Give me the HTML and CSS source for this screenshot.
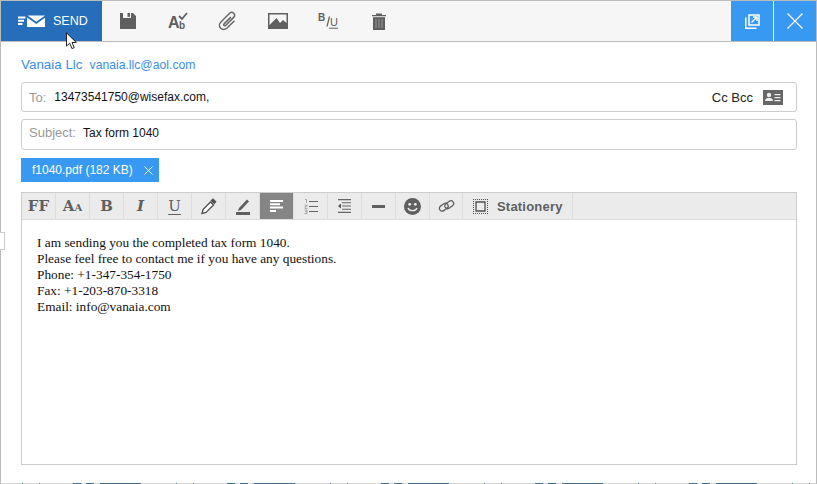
FILE: index.html
```html
<!DOCTYPE html>
<html lang="en">
<head>
<meta charset="utf-8">
<title>Compose</title>
<link rel="stylesheet" href="styles.css">
</head>
<body>
<div class="window">
  <header class="topbar">
    <button class="send">
      <svg width="28" height="12" viewBox="0 0 28 12"><path d="M0 1.500h7.500v2H0zM0 4.800h6v2H0zM0 8.100h4.500v2H0z" fill="#fff"/><path d="M9.500 0.500h17.500l-8.700 6.300zM9 2.500l9.300 6.600 8.700-6.300V12H9z" fill="#fff"/></svg>
      <span>SEND</span>
    </button>
    <div class="tools">
      <svg class="tool" width="16" height="16" viewBox="0 0 16 16"><path d="M0 0h3v5h8V0h2l3 3v13H0z" fill="#5f5f5f"/><path d="M7.500 0h2.500v3.800H7.500z" fill="#5f5f5f"/></svg>
      <svg class="tool t2" width="20" height="18" viewBox="0 0 20 18"><text x="0" y="16" class="ab-a">A</text><text x="11" y="17" class="ab-b">b</text><path d="M11 4l3 3 5-6" fill="none" stroke="#5f5f5f" stroke-width="1.800"/></svg>
      <svg class="tool t3" width="20" height="20" viewBox="0 0 20 20"><g transform="rotate(45 10 10) translate(10 10) scale(1.2) translate(-10 -10)"><path d="M13.600 6V15a3.600 3.600 0 0 1-7.200 0V4.500a2.400 2.400 0 0 1 4.800 0V14a.9.9 0 0 1-1.800 0V6" fill="none" stroke="#666" stroke-width="1.250"/></g></svg>
      <svg class="tool t4" width="20" height="16" viewBox="0 0 20 16"><path d="M0 0h20v16H0z" fill="#5f5f5f"/><path d="M1.500 1.500h17v8.500l-3.500-3-3 3-3.500-5-7 7z" fill="#f5f5f5"/></svg>
      <svg class="tool t5" width="21" height="16" viewBox="0 0 21 16"><text x="0" y="8" class="biu-b">B</text><path d="M9 13.500L11.500 3.500" stroke="#5f5f5f" stroke-width="1.200"/><text x="12" y="13" class="biu-u">U</text><path d="M11 15.200h9" stroke="#5f5f5f"/></svg>
      <svg class="tool t6" width="14" height="17" viewBox="0 0 14 17"><path d="M0 2h14v1.200H0zM4 0.500h6V2H4z" fill="#5f5f5f"/><path d="M1 4.200h12V17H1z" fill="#5f5f5f"/><path d="M4 6v9M7 6v9M10 6v9" stroke="#9b9b9b"/></svg>
    </div>
    <div class="winbtns">
      <button class="winbtn"><svg width="15" height="15" viewBox="0 0 15 15"><path d="M4 1h10v10H4z" fill="none" stroke="#fff" stroke-width="1.500"/><path d="M.8 3.500v10.700h10.700" fill="none" stroke="#fff" stroke-width="1.500"/><path d="M6.500 8.500l5-5M8 3h4v4" fill="none" stroke="#fff" stroke-width="1.400"/></svg></button>
      <button class="winbtn"><svg width="16" height="16" viewBox="0 0 16 16"><path d="M0.500 0.500l15 15M15.500 0.500l-15 15" stroke="#fff" stroke-width="1.200"/></svg></button>
    </div>
  </header>
  <main class="compose">
    <div class="from"><span class="from-name">Vanaia Llc</span><span class="from-mail">vanaia.llc@aol.com</span></div>
    <div class="field to">
      <span class="label">To:</span><span class="value">13473541750@wisefax.com,</span>
      <span class="cc">Cc Bcc</span>
      <svg class="contact" width="20" height="15" viewBox="0 0 20 15"><path d="M0 0h20v15H0z" fill="#666"/><circle cx="6" cy="5" r="2.200" fill="#eee"/><path d="M2 11c0-2.500 2-3 4-3s4 .5 4 3z" fill="#eee"/><path d="M11.500 4h6v1.300h-6zM11.500 7h6v1.300h-6zM11.500 10h6v1.300h-6z" fill="#eee"/></svg>
    </div>
    <div class="field subject"><span class="label">Subject:</span><span class="value">Tax form 1040</span></div>
    <div class="attachment"><span>f1040.pdf (182 KB)</span><svg width="9" height="9" viewBox="0 0 9 9"><path d="M0.500 0.500l8 8M8.500 0.500l-8 8" stroke="#fff"/></svg></div>
    <section class="editor">
      <div class="edbar">
        <div class="edbtn glyph ff">FF</div>
        <div class="edbtn glyph aa">A<small>A</small></div>
        <div class="edbtn glyph">B</div>
        <div class="edbtn glyph it">I</div>
        <div class="edbtn glyph un">U</div>
        <div class="edbtn"><svg width="16" height="17" viewBox="0 0 16 17"><path d="M1 15.500l1-4 7.500-7.500 3 3L5 14.500z" fill="#fff" stroke="#4f4f4f" stroke-width="1.300"/><path d="M9.500 2.500l2.500-2.300 3.500 3.500-2.300 2.500z" fill="#4f4f4f"/></svg></div>
        <div class="edbtn"><svg width="14" height="17" viewBox="0 0 14 17"><path d="M3 10l8-8.500 2 2-8 8.500-3 1z" fill="#5f5f5f"/><path d="M0 14h14v3H0z" fill="#5f5f5f"/></svg></div>
        <div class="edbtn active"><svg width="14" height="12" viewBox="0 0 14 12"><path d="M0 0h13v2H0zM0 3.300h10v2H0zM0 6.600h13v2H0zM0 9.900h6v2H0z" fill="#fff"/></svg></div>
        <div class="edbtn"><svg width="14" height="15" viewBox="0 0 14 15"><path d="M5 2.500h9M5 7.500h9M5 12.500h9" stroke="#666" stroke-width="1.200"/><path d="M1 0.500h1.500v3.500M0.500 6h2.500v1.700H1V9.500h2.500M0.500 11h2.500v3.500h-2.500M1 12.700h2" fill="none" stroke="#999" stroke-width=".8"/></svg></div>
        <div class="edbtn"><svg width="14" height="14" viewBox="0 0 14 14"><path d="M0 .6h13M4 3.800h9M4 7h9M4 10.200h9M0 13.400h13" stroke="#666" stroke-width="1.100"/><path d="M3 4.500v5L0 7z" fill="#555"/></svg></div>
        <div class="edbtn"><svg width="13" height="3" viewBox="0 0 13 3"><path d="M0 0h13v3H0z" fill="#5f5f5f"/></svg></div>
        <div class="edbtn"><svg width="17" height="17" viewBox="0 0 17 17"><circle cx="8.500" cy="8.500" r="8.500" fill="#5f5f5f"/><circle cx="5.700" cy="6.300" r="1.400" fill="#eee"/><circle cx="11.300" cy="6.300" r="1.400" fill="#eee"/><path d="M4 10c1 3.500 8 3.500 9 0" fill="none" stroke="#eee" stroke-width="1.300"/></svg></div>
        <div class="edbtn link"><svg width="17" height="12" viewBox="0 0 17 12"><g fill="none" stroke="#5f5f5f" stroke-width="1.300"><rect x="1" y="4.500" width="9.500" height="5.500" rx="2.700" transform="rotate(-35 5.700 7.200)"/><rect x="6.500" y="2" width="9.500" height="5.500" rx="2.700" transform="rotate(-35 11.200 4.800)"/></g></svg></div>
        <div class="edbtn stationery"><svg width="15" height="15" viewBox="0 0 15 15"><path d="M3 3h9v9H3z" fill="none" stroke="#4f4f4f" stroke-width="1.300"/><path d="M0 .5h15M0 14.500h15M.5 0v15M14.500 0v15" fill="none" stroke="#4f4f4f" stroke-width="1" stroke-dasharray="1 1"/></svg><span>Stationery</span></div>
      </div>
      <div class="body">
        <p>I am sending you the completed tax form 1040.</p>
        <p>Please feel free to contact me if you have any questions.</p>
        <p>Phone: +1-347-354-1750</p>
        <p>Fax: +1-203-870-3318</p>
        <p>Email: info@vanaia.com</p>
      </div>
    </section>
  </main>
  <svg class="cursor" width="12" height="18" viewBox="0 0 14 20"><path d="M0.500 0.500v15.500l3.800-3.400 2.600 6.200 2.700-1.100-2.600-6h5z" fill="#fff" stroke="#111" stroke-width="1.100"/></svg>
  <div class="stub"></div>
  <div class="edge"></div>
</div>
</body>
</html>
```
FILE: styles.css
```css
* { box-sizing: border-box; }
html, body { margin: 0; padding: 0; background: #fff; }
body { width: 817px; height: 484px; overflow: hidden; font-family: "Liberation Sans", Arial, sans-serif; }
button { border: 0; padding: 0; margin: 0; font: inherit; }

.window { position: relative; width: 817px; height: 484px; border: 1px solid #bbb; border-bottom: 0; display: flex; flex-direction: column; }

.topbar { height: 41px; flex: none; display: flex; background: #f6f6f6; border-bottom: 1px solid #bbb; }
.send { width: 101px; background: #266eb9; color: #fff; font-size: 12.500px; display: flex; align-items: center; padding-left: 17px; gap: 7px; }
.tools { flex: 1; display: flex; align-items: center; padding-left: 18px; position: relative; }
.tool { flex: none; }
.t2 { margin-left: 32px; }
.t3 { margin-left: 30px; }
.t4 { margin-left: 30px; }
.t5 { margin-left: 30px; }
.t6 { margin-left: 33px; }
.ab-a { font: bold 16px "Liberation Sans", sans-serif; fill: #5f5f5f; }
.ab-b { font: bold 10px "Liberation Sans", sans-serif; fill: #5f5f5f; }
.biu-b { font: bold 10px "Liberation Sans", sans-serif; fill: #5f5f5f; }
.biu-u { font: 11px "Liberation Sans", sans-serif; fill: #5f5f5f; }
.winbtns { display: flex; gap: 1px; }
.winbtn { width: 42px; height: 40px; background: #3899f2; display: flex; align-items: center; justify-content: center; }

.compose { flex: 1; padding: 0 19px 19px 20px; display: flex; flex-direction: column; }
.from { height: 40px; padding-top: 15px; display: flex; align-items: baseline; gap: 7px; color: #3a8ee6; flex: none; }
.from-name { font-size: 13.400px; }
.from-mail { font-size: 12.200px; }

.field { border: 1px solid #ccc; border-radius: 3px; display: flex; align-items: center; font-size: 12px; padding: 0 13px 0 7px; flex: none; }
.to { height: 30px; }
.subject { height: 31px; margin-top: 7px; padding-bottom: 4px; }
.label { color: #999; font-size: 13px; }
.to .label { margin-right: 8px; }
.subject .label { margin-right: 7px; }
.value { color: #111; flex: 1; }
.cc { color: #222; font-size: 13px; margin-right: 10px; }
.contact { flex: none; }

.attachment { margin-top: 8px; width: 138px; height: 24px; background: #3899f2; color: #fff; font-size: 12px; display: flex; align-items: center; padding-left: 11px; gap: 11px; flex: none; }

.editor { margin-top: 10px; flex: 1; border: 1px solid #ccc; display: flex; flex-direction: column; min-height: 0; }
.edbar { height: 27px; flex: none; background: #ebebeb; display: flex; border-bottom: 1px solid #ddd; }
.edbtn { width: 34px; height: 100%; border-right: 1px solid #ddd; display: flex; align-items: center; justify-content: center; color: #5f5f5f; flex: none; }
.link { width: 33px; }
.glyph { font-family: "DejaVu Serif", "Liberation Serif", serif; font-weight: bold; font-size: 15px; }
.glyph small { font-size: 10px; margin-top: 3px; }
.it { font-style: italic; }
.un { text-decoration: underline; text-underline-offset: 3px; font-weight: normal; }
.active { background: #858585; }
.stationery { width: 110px; gap: 9px; justify-content: flex-start; padding-left: 10px; font: bold 13px "Liberation Sans", sans-serif; letter-spacing: .2px; }
.body { flex: 1; padding: 15px; font: 13.330px/16px "Liberation Serif", serif; color: #111; }
.body p { margin: 0; }

.cursor { position: absolute; left: 65px; top: 31px; }
.stub { position: absolute; left: -1px; top: 231px; width: 5px; height: 18px; border: 1px solid #ccc; border-left: 0; background: #fff; }
.edge { position: absolute; left: 0; right: 0; bottom: 0; height: 1px; background: repeating-linear-gradient(90deg, #d8d8d8 0 21px, #4f7f8f 21px 22px, #d8d8d8 22px 38px, #777 38px 39px, #d8d8d8 39px 72px, #3f6f94 72px 80px, #d8d8d8 80px 85px, #3f6f94 85px 93px, #d8d8d8 93px 99px, #3f6f94 99px 140px, #d8d8d8 140px 154px); }
```
